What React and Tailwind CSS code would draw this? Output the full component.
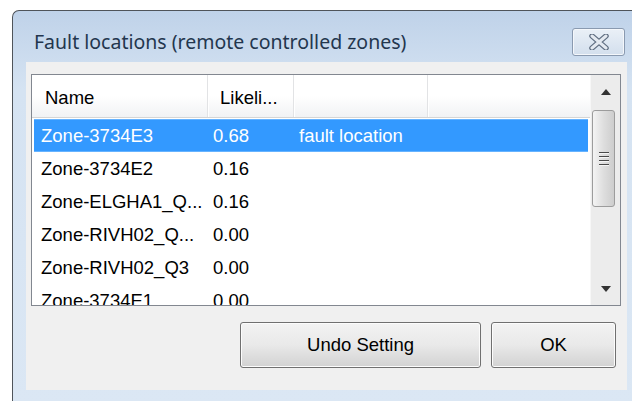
import React from 'react';

const ROWS = [
    { name: 'Zone-3734E3', value: '0.68', note: 'fault location', selected: true },
    { name: 'Zone-3734E2', value: '0.16' },
    { name: 'Zone-ELGHA1_Q...', value: '0.16' },
    { name: 'Zone-RIVH02_Q...', value: '0.00' },
    { name: 'Zone-RIVH02_Q3', value: '0.00' },
    { name: 'Zone-3734E1', value: '0.00' },
];

function CloseGlyph() {
    return (
        <svg width="22" height="16" viewBox="0 0 22 16">
            <path d="M4 2 L18 14 M18 2 L4 14" stroke="#5f6d80" strokeWidth="5.5" strokeLinecap="round" />
            <path d="M4 2 L18 14 M18 2 L4 14" stroke="#e4e9f0" strokeWidth="3" strokeLinecap="round" />
        </svg>
    );
}

function Arrow({ down }) {
    return (
        <svg width="10" height="6" viewBox="0 0 10 6">
            <polygon points={down ? '0,0 10,0 5,6' : '0,6 10,6 5,0'} fill="#333" />
        </svg>
    );
}

function ScrollBar() {
    return (
        <div className="w-[30px] shrink-0 flex flex-col bg-[#ececec] border-l border-[#f7f7f7]">
            <div className="h-[33px] shrink-0 flex items-center justify-center pl-[1px]">
                <Arrow />
            </div>
            <div className="mt-[2px] ml-[1px] w-[23px] h-[97px] shrink-0 rounded-[3px] border border-[#9c9c9c] bg-gradient-to-r from-[#f4f4f4] via-[#dedede] to-[#cdcdcd] flex flex-col items-center justify-center gap-[2px]">
                {[0, 1, 2, 3].map(i => (
                    <div key={i} className="w-[10px] h-[2px] border-t border-[#4a4a4a] border-b border-b-[#f5f5f5]" />
                ))}
            </div>
            <div className="flex-1" />
            <div className="h-[33px] shrink-0 flex items-center justify-center pl-[1px]">
                <Arrow down />
            </div>
        </div>
    );
}

function WinButton({ label, width }) {
    return (
        <button className={`${width} h-[46px] rounded-[3px] border border-[#707070] bg-gradient-to-b from-[#f3f3f3] from-0% via-[#e9e9e9] via-50% to-[#d2d2d2] shadow-[inset_0_0_0_1px_#fcfcfc] text-[18.5px] text-black`}>
            {label}
        </button>
    );
}

export default function App() {
    return (
        <div className="w-[632px] h-[401px] overflow-hidden bg-white pl-[12px] pt-[10px] font-['Liberation_Sans',sans-serif]">
            <div className="w-[620px] h-[391px] flex flex-col rounded-tl-[7px] border-l border-t border-[#4f545a] bg-gradient-to-b from-[#bfd2e9] via-[#d5e3f2] via-20% to-[#dbe7f4]">
                {/* caption */}
                <div className="pt-[17px] pb-[6px] pl-[21px] pr-[7px]">
                    <div className="h-[28px] flex items-center justify-between">
                        <span className="text-[19.5px] text-[#23364e] font-['Noto_Sans',sans-serif] leading-none -mt-[1px]">
                            Fault locations (remote controlled zones)
                        </span>
                        <div className="w-[53px] h-[28px] rounded-[3px] border border-[#8a9ab0] bg-gradient-to-b from-[#eaf0f7] to-[#d3dfed] shadow-[inset_0_0_0_1px_#f4f7fb] flex items-center justify-center">
                            <CloseGlyph />
                        </div>
                    </div>
                </div>

                {/* client area */}
                <div className="flex-1 pl-[13px] pr-[5px] pb-[11px] flex">
                    <div className="flex-1 bg-[#f0f0f0] flex flex-col pt-[12px] pl-[5px] pr-[6px]">
                        <div className="h-[232px] shrink-0 border border-[#828790] bg-white flex">
                            <div className="flex-1 flex flex-col overflow-hidden text-[18.5px] text-black">
                                {/* header */}
                                <div className="h-[43px] shrink-0 flex border-b border-[#d5d5d5] bg-gradient-to-b from-white from-50% to-[#f1f2f4]">
                                    <div className="w-[176px] pl-[13px] pt-[4px] flex items-center border-r border-[#e2e3e5]">Name</div>
                                    <div className="w-[86px] pl-[11px] pt-[4px] flex items-center border-l border-white border-r border-r-[#e2e3e5]">Likeli...</div>
                                    <div className="w-[134px] border-l border-white border-r border-r-[#e2e3e5]" />
                                    <div className="flex-1 border-l border-white" />
                                </div>
                                {/* rows */}
                                <div className="pt-[1px] px-[2px] flex flex-col">
                                    {ROWS.map(row => (
                                        <div
                                            key={row.name}
                                            className={`h-[33px] shrink-0 flex items-center whitespace-nowrap ${row.selected ? 'bg-[#3399ff] text-white border-y border-[#66b3ff]' : ''}`}
                                        >
                                            <div className="w-[174px] pl-[7px] overflow-hidden">{row.name}</div>
                                            <div className="w-[86px] pl-[5px]">{row.value}</div>
                                            <div className="w-[134px] pl-[5px]">{row.note ?? ''}</div>
                                        </div>
                                    ))}
                                </div>
                            </div>
                            <ScrollBar />
                        </div>

                        <div className="mt-[16px] flex justify-end gap-[10px] pr-[5px]">
                            <WinButton label="Undo Setting" width="w-[241px]" />
                            <WinButton label="OK" width="w-[125px]" />
                        </div>
                    </div>
                </div>
            </div>
        </div>
    );
}
